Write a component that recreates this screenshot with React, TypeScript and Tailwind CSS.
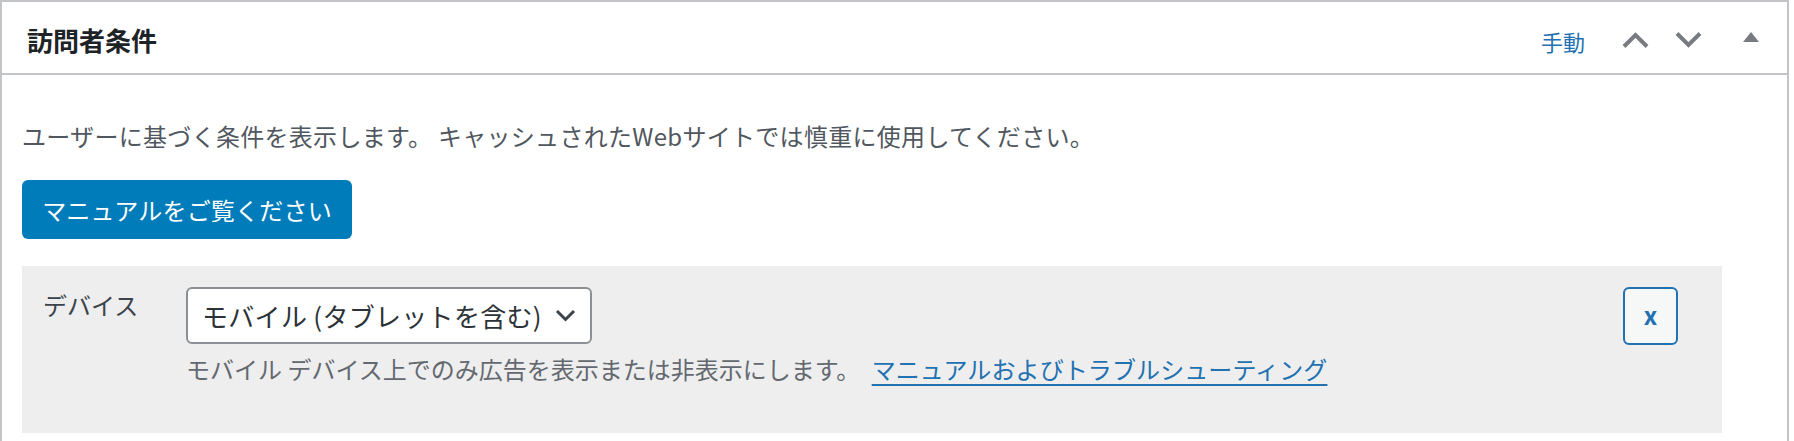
import React from 'react';

const jp = '[font-family:"Noto_Sans_CJK_JP","Noto_Sans",sans-serif]';

function Chevron({ up }: { up?: boolean }) {
  return (
    <svg width="27" height="16" viewBox="0 0 27 16" fill="none">
      <polyline
        points={up ? '2,14.5 13.5,3 25,14.5' : '2,1.5 13.5,13 25,1.5'}
        stroke="#787c82"
        strokeWidth="4"
        strokeLinecap="butt"
        strokeLinejoin="miter"
      />
    </svg>
  );
}

export default function App() {
  return (
    <div className={`w-[1794px] h-[441px] overflow-hidden bg-white ${jp}`}>
      <div className="w-[1789px] h-[470px] border-2 border-[#c3c4c7] bg-white">
        {/* header */}
        <div className="h-[73px] border-b-2 border-[#c3c4c7] flex items-center">
          <h2 className="pl-[25px] pt-[4px] text-[26px] leading-[36px] font-semibold text-[#1d2327]">訪問者条件</h2>
          <div className="ml-auto flex items-center h-full">
            <a className="text-[22px] leading-[30px] pt-[6px] text-[#2271b1] mr-[24px]">手動</a>
            <button className="w-[53px] h-full flex items-center justify-center pt-[4px]">
              <Chevron up />
            </button>
            <button className="w-[53px] h-full flex items-center justify-center pt-[4px]">
              <Chevron />
            </button>
            <button className="w-[72px] h-full flex items-center justify-center pb-[1px]">
              <svg width="16" height="10" viewBox="0 0 16 10">
                <polygon points="8,0 16,10 0,10" fill="#787c82" />
              </svg>
            </button>
          </div>
        </div>

        {/* inside */}
        <div className="px-[20px]">
          <p className="mt-[43px] text-[24px] leading-[36px] tracking-[0.3px] text-[#50575e]">
            ユーザーに基づく条件を表示します。 キャッシュされたWebサイトでは慎重に使用してください。
          </p>
          <button className="mt-[26px] w-[330px] h-[59px] rounded-[6px] bg-[#007cba] text-white text-[24px] leading-[36px] tracking-[0.2px]">
            マニュアルをご覧ください
          </button>

          <div className="mt-[27px] w-[1700px] h-[167px] bg-[#eeeeee] pt-[21px] flex items-start">
            <div className="w-[164px] pl-[21px] text-[24px] leading-[36px] text-[#3c434a]">デバイス</div>
            <div className="flex-1">
              <div className="w-[406px] h-[57px] border-2 border-[#8c8f94] rounded-[6px] bg-white flex items-center pl-[14px] pr-[14px]">
                <span className="text-[26px] leading-[36px] tracking-[0.3px] text-[#2c3338]">モバイル (タブレットを含む)</span>
                <svg className="ml-auto" width="21" height="13" viewBox="0 0 21 13" fill="none">
                  <polyline points="2,2 10.5,10.5 19,2" stroke="#3c434a" strokeWidth="3" />
                </svg>
              </div>
              <p className="mt-[7px] text-[24px] leading-[36px] text-[#646970]">
                モバイル デバイス上でのみ広告を表示または非表示にします。{' '}
                <a className="ml-[6px] tracking-[0.1px] text-[#2271b1] underline underline-offset-[5px] decoration-2">
                  マニュアルおよびトラブルシューティング
                </a>
              </p>
            </div>
            <button className="mr-[44px] w-[55px] h-[58px] border-2 border-[#2271b1] rounded-[6px] bg-[#f6f7f7] text-[#2271b1] text-[24px] leading-none font-semibold flex items-center justify-center pb-[2px]">
              x
            </button>
          </div>
        </div>
      </div>
    </div>
  );
}
